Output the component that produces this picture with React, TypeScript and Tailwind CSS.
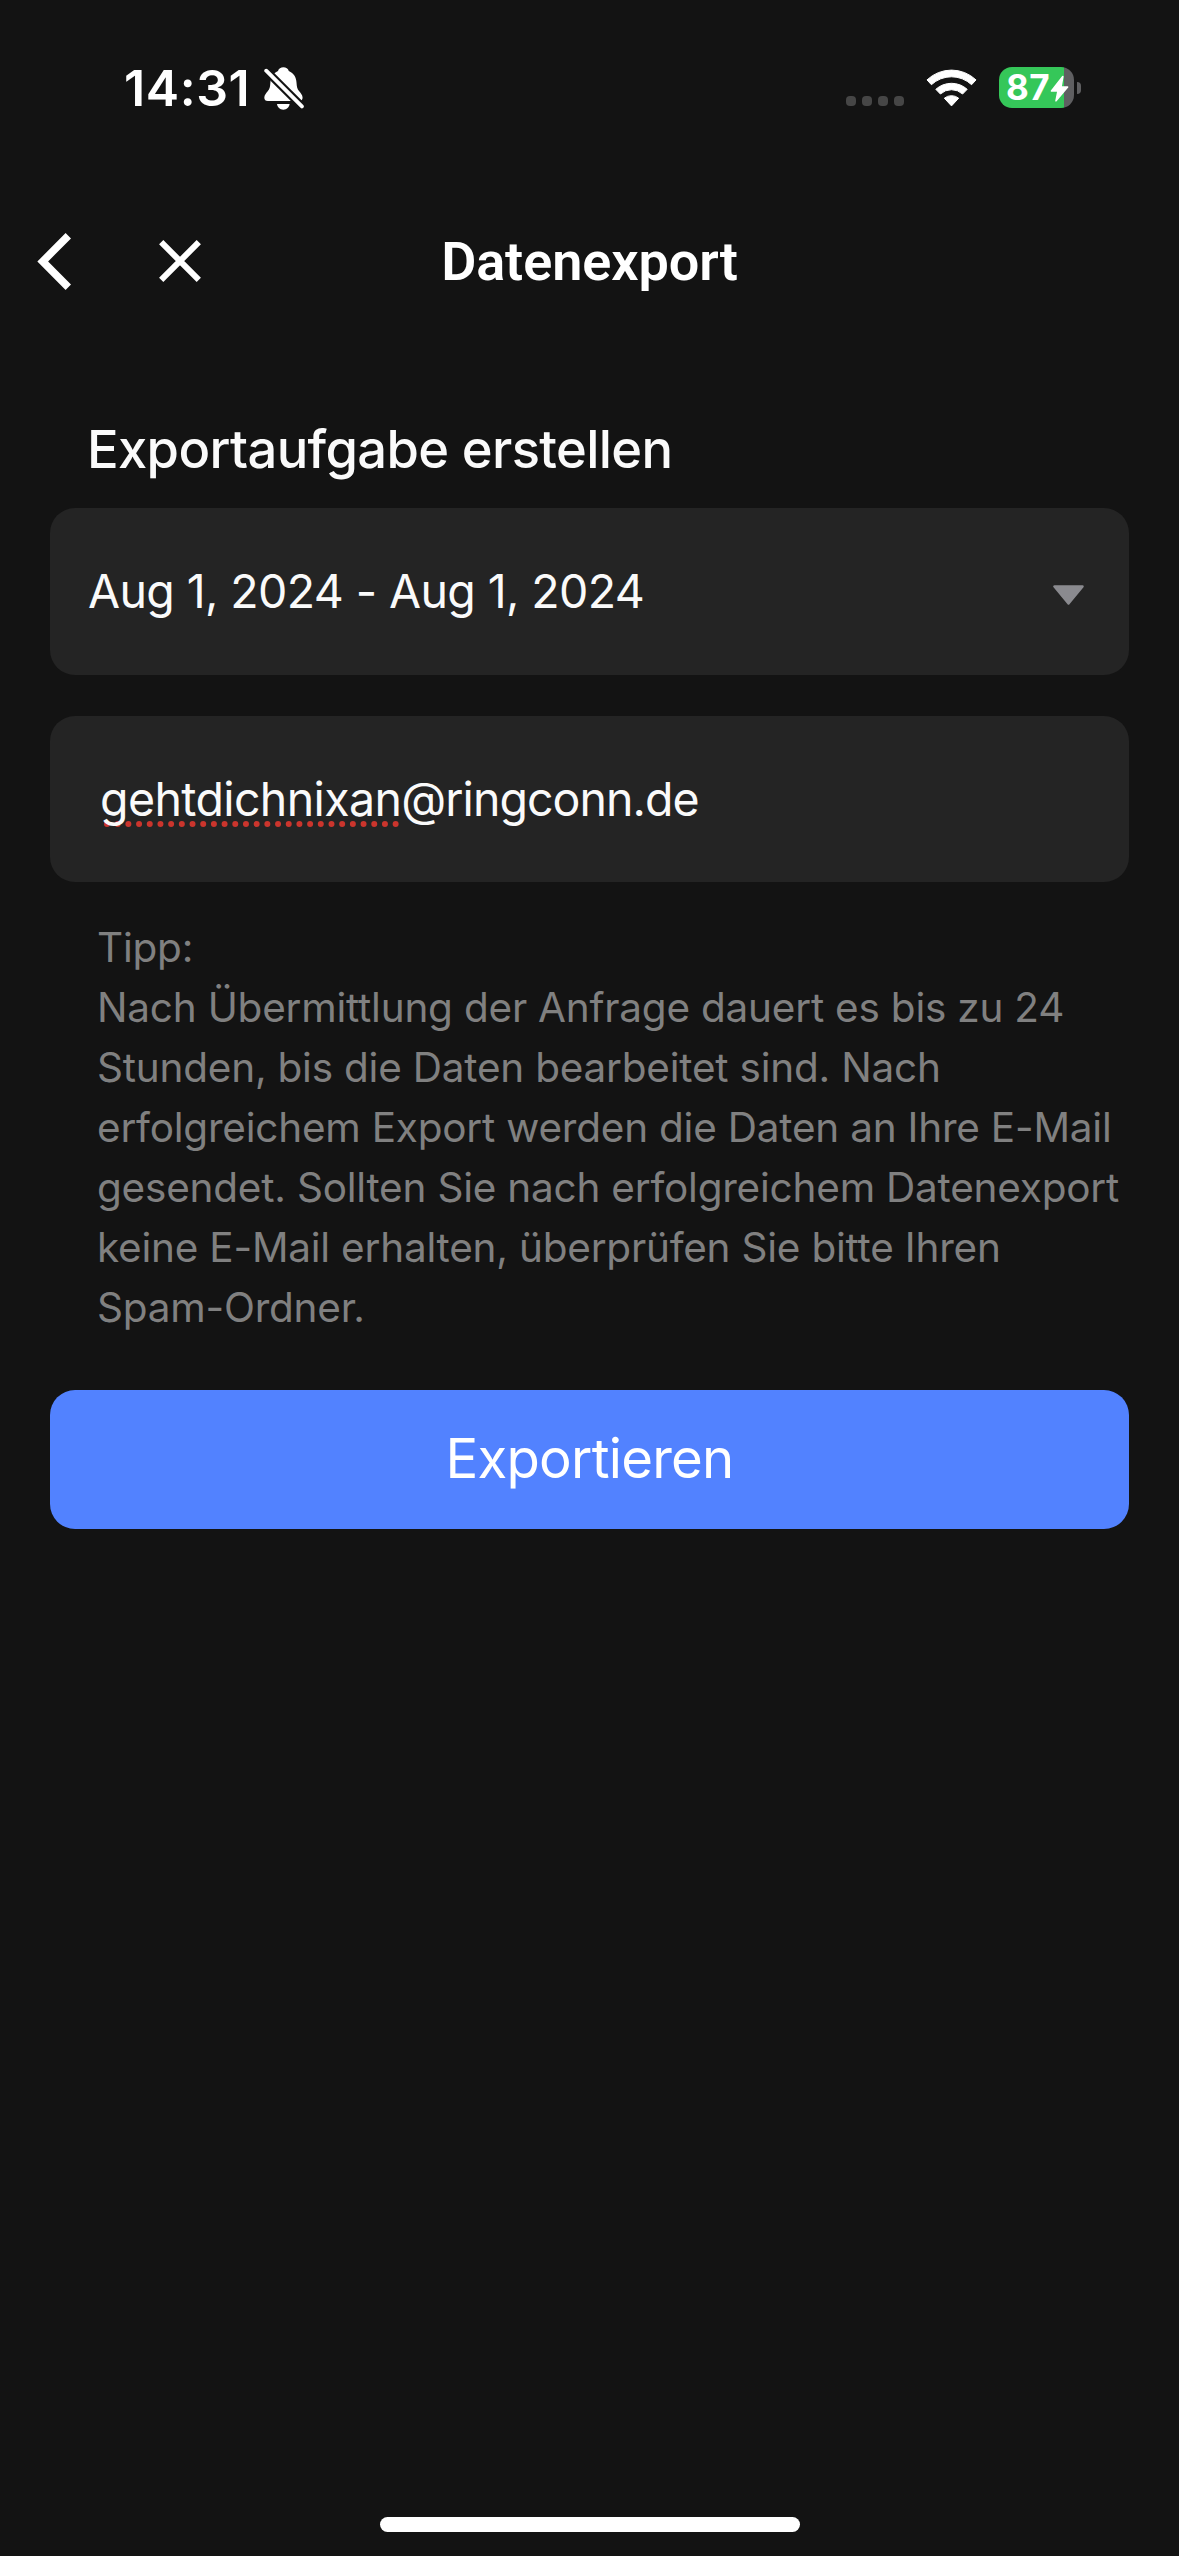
import { ReactNode } from "react";

const tipLines = [
  "Tipp:",
  "Nach Übermittlung der Anfrage dauert es bis zu 24",
  "Stunden, bis die Daten bearbeitet sind. Nach",
  "erfolgreichem Export werden die Daten an Ihre E-Mail",
  "gesendet. Sollten Sie nach erfolgreichem Datenexport",
  "keine E-Mail erhalten, überprüfen Sie bitte Ihren",
  "Spam-Ordner.",
];

function BellOff() {
  return (
    <svg width="40" height="44" viewBox="0 0 40 44" fill="none">
      <path
        d="M19.4 0.3c-2.6 0-4.6 1.3-5.4 3.6C9 6 6.8 10 6.4 15.5c-.3 4.4-.8 6.5-2.5 8.6C2.2 26.2.3 28.2.3 30.8c0 2 1.3 3.3 3.5 3.3h31.3c2.2 0 3.5-1.3 3.5-3.3 0-2.6-1.9-4.6-3.6-6.7-1.7-2.1-2.2-4.2-2.5-8.6C32.1 10 29.8 6 24.8 3.9 24 1.6 22 .3 19.4.3Z"
        fill="#fff"
      />
      <path d="M13 37h12.600c-.4 3.3-3 5.7-6.3 5.7S13.400 40.3 13 37Z" fill="#fff" />
      <path d="M0 1.5 40 41.500" stroke="#131313" strokeWidth="8" />
      <path d="M2.2 3.7 37.900 39.400" stroke="#fff" strokeWidth="3.8" strokeLinecap="round" />
    </svg>
  );
}

function Wifi() {
  return (
    <svg width="51" height="38" viewBox="0 0 51 38" fill="#fff" stroke="#fff" strokeWidth="1" strokeLinejoin="round">
      <path d="M1 10.9A35.5 35.5 0 0 1 50 10.9L45.6 15.7A29.5 29.5 0 0 0 5.4 15.7Z" />
      <path d="M9.8 20.3A23.5 23.5 0 0 1 41.2 20.3L36.6 25A16.5 16.5 0 0 0 14.4 25Z" />
      <path d="M18.3 29.2A11.5 11.5 0 0 1 32.7 29.2L25.500 36.9Z" />
    </svg>
  );
}

function Battery() {
  return (
    <div className="flex items-center gap-[3px] pb-[1px]">
      <div className="relative flex h-[41px] w-[75px] items-center overflow-hidden rounded-[13px] bg-[linear-gradient(to_right,#35c759_65px,#5f5f61_65px)] pl-[7px]">
        <span className="text-[35px] leading-none font-bold tracking-[0.5px] text-white">87</span>
        <svg className="absolute top-0 left-0" width="75" height="41" viewBox="0 0 75 41">
          <path
            d="M63.8 9.6 52.5 24H59L57 33.800 68.600 20H62Z"
            fill="#fff"
            stroke="#fff"
            strokeWidth="1.6"
            strokeLinejoin="round"
          />
        </svg>
      </div>
      <div className="h-3 w-1 rounded-r-full bg-[#5f5f61]" />
    </div>
  );
}

function StatusBar() {
  return (
    <div className="flex h-[176px] items-center pr-[98px] pl-[124px] text-white">
      <span className="text-[50px] leading-none font-semibold tracking-[0.6px]">14:31</span>
      <div className="ml-[14px] pt-[2px]">
        <BellOff />
      </div>
      <div className="ml-auto flex items-center">
        <div className="mr-[22px] flex gap-[6px] pt-[26px]">
          {[0, 1, 2, 3].map((i) => (
            <span key={i} className="size-[10px] rounded-[4px] bg-[#464646]" />
          ))}
        </div>
        <Wifi />
        <div className="ml-[22px]">
          <Battery />
        </div>
      </div>
    </div>
  );
}

function NavBar() {
  return (
    <div className="grid h-[173px] grid-cols-[1fr_auto_1fr] items-center pl-[37px] text-white">
      <div className="flex items-center pb-[2px]">
        <svg width="35" height="57" viewBox="0 0 35 57" fill="none">
          <path d="M31.3 2.7 5.7 28.5 31.3 54.3" stroke="#fff" strokeWidth="7.6" />
        </svg>
        <svg className="mb-[1px] ml-[87px]" width="42" height="42" viewBox="0 0 42 42" fill="none">
          <path d="M2.2 2.2 39.8 39.8M39.8 2.2 2.2 39.8" stroke="#fff" strokeWidth="6" />
        </svg>
      </div>
      <h1 className="-ml-[37px] pb-[1px] font-['Roboto',sans-serif] text-[54px] leading-[64px] font-semibold tracking-[-0.09px]">
        Datenexport
      </h1>
      <div />
    </div>
  );
}

function Field({ className, children }: { className: string; children: ReactNode }) {
  return (
    <div
      className={`flex items-center rounded-[25px] bg-[#242424] text-[46.5px] leading-[60px] whitespace-nowrap text-[#fafafa] ${className}`}
    >
      {children}
    </div>
  );
}

export default function App() {
  return (
    <div className="flex h-[2556px] w-[1179px] flex-col overflow-hidden bg-[#131313] font-['Inter',sans-serif]">
      <StatusBar />
      <NavBar />

      <main className="flex flex-col px-[50px] pt-[68px]">
        <h2 className="mb-[27px] pl-[37px] text-[52.5px] leading-[64px] font-medium tracking-[-0.65px] text-[#fafafa]">
          Exportaufgabe erstellen
        </h2>

        <Field className="h-[167px] justify-between pr-[45px] pl-[38px]">
          <span className="pb-[2px] tracking-[-0.61px]">Aug 1, 2024 - Aug 1, 2024</span>
          <svg className="mt-[7px]" width="31" height="20" viewBox="0 0 31 20">
            <path
              d="M1.5 1.5H29.5L15.5 18.5Z"
              fill="#8a8a8f"
              stroke="#8a8a8f"
              strokeWidth="2.5"
              strokeLinejoin="round"
            />
          </svg>
        </Field>

        <Field className="mt-[41px] h-[166px] pl-[50px]">
          <span className="relative tracking-[-0.62px]">
            {/* spell checker marks */}
            <svg className="absolute top-[52px] left-[4px]" width="296" height="6" viewBox="0 0 296 6">
              <path d="M3 3H292.5" stroke="#cb352d" strokeWidth="6" strokeLinecap="round" strokeDasharray="0 10.69" />
            </svg>
            <span className="relative">gehtdichnixan</span>
          </span>
          <span className="tracking-[-0.95px]">@ringconn.de</span>
        </Field>

        <p className="mt-[36px] pl-[47px] text-[40.5px] leading-[60px] tracking-[-0.22px] whitespace-nowrap text-[#808080]">
          {tipLines.map((line) => (
            <span key={line} className="block">
              {line}
            </span>
          ))}
        </p>

        <button className="mt-[52px] h-[139px] rounded-[25px] bg-[#5282ff] pb-[4px] text-[54.5px] leading-[64px] tracking-[-0.75px] text-white">
          Exportieren
        </button>
      </main>

      <div className="mx-auto mt-auto mb-6 h-[15px] w-[420px] shrink-0 rounded-full bg-white" />
    </div>
  );
}
